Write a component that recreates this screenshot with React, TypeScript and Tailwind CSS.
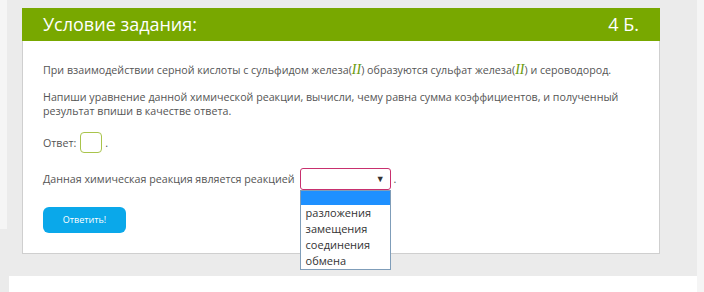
import React, { useState } from "react";

const options = ["разложения", "замещения", "соединения", "обмена"];

const Roman = () => (
  <span className="font-['Liberation_Serif',serif] italic text-[14px] text-[#6a9a0c] leading-none">II</span>
);

const App = () => {
  const [answer, setAnswer] = useState("");
  const [open] = useState(true);

  return (
    <div className="w-[704px] h-[292px] flex bg-[#ebebeb] font-['Open_Sans',sans-serif] text-[#555] overflow-hidden">
      {/* левая полоса */}
      <div className="w-[7px] shrink-0">
        <div className="h-[229px] bg-[#f5f5f5]"></div>
      </div>

      <div className="flex-1 flex flex-col">
        <div className="pt-[8px] pl-[15px] h-[276px]">
          <div className="w-[638px] bg-white">
            <div className="h-[33px] bg-[#78a800] flex items-center justify-between px-[21px] text-white text-[18px]">
              <span>Условие задания:</span>
              <span>4 Б.</span>
            </div>

            <div className="border border-t-0 border-[#cfcfcf] pl-[20px] pr-[18px] pt-[22px] pb-[20px] text-[10.7px] leading-[14px]">
              <p>
                При взаимодействии серной кислоты с сульфидом железа(<Roman />) образуются сульфат железа(
                <Roman />) и сероводород.
              </p>

              <p className="mt-[13px]">
                Напиши уравнение данной химической реакции, вычисли, чему равна сумма коэффициентов, и полученный
                результат впиши в качестве ответа.
              </p>

              <div className="mt-[14px] flex items-center">
                <span>Ответ:</span>
                <input
                  value={answer}
                  onChange={(e) => setAnswer(e.target.value)}
                  className="ml-[4px] w-[22px] h-[21px] border border-[#a9c44c] rounded-[4px] outline-none"
                />
                <span className="ml-[3px]">.</span>
              </div>

              <div className="mt-[15px] flex items-center">
                <span>Данная химическая реакция является реакцией</span>
                <div className="relative ml-[5px]">
                  <div className="w-[91px] h-[22px] border border-[#c8306e] rounded-[3px] flex items-center justify-end pr-[5px]">
                    <span className="text-[9px] text-[#333]">▼</span>
                  </div>
                  {open && (
                    <div className="absolute left-0 top-[22px] w-[91px] bg-white border border-[#7f9db9] z-10 text-[11px] leading-[16px] text-[#333]">
                      <div className="h-[14px] bg-[#1e90ff]"></div>
                      {options.map((o) => (
                        <div key={o} className="pl-[5px]">
                          {o}
                        </div>
                      ))}
                    </div>
                  )}
                </div>
                <span className="ml-[3px]">.</span>
              </div>

              <button className="mt-[17px] w-[83px] h-[26px] rounded-[6px] bg-[#0aa8ea] text-white text-[9px]">
                Ответить!
              </button>
            </div>
          </div>
        </div>
        <div className="flex-1 ml-[2px] bg-white"></div>
      </div>

      <div className="w-[7px] shrink-0 bg-[#f5f5f5]"></div>
    </div>
  );
};

export default App;
